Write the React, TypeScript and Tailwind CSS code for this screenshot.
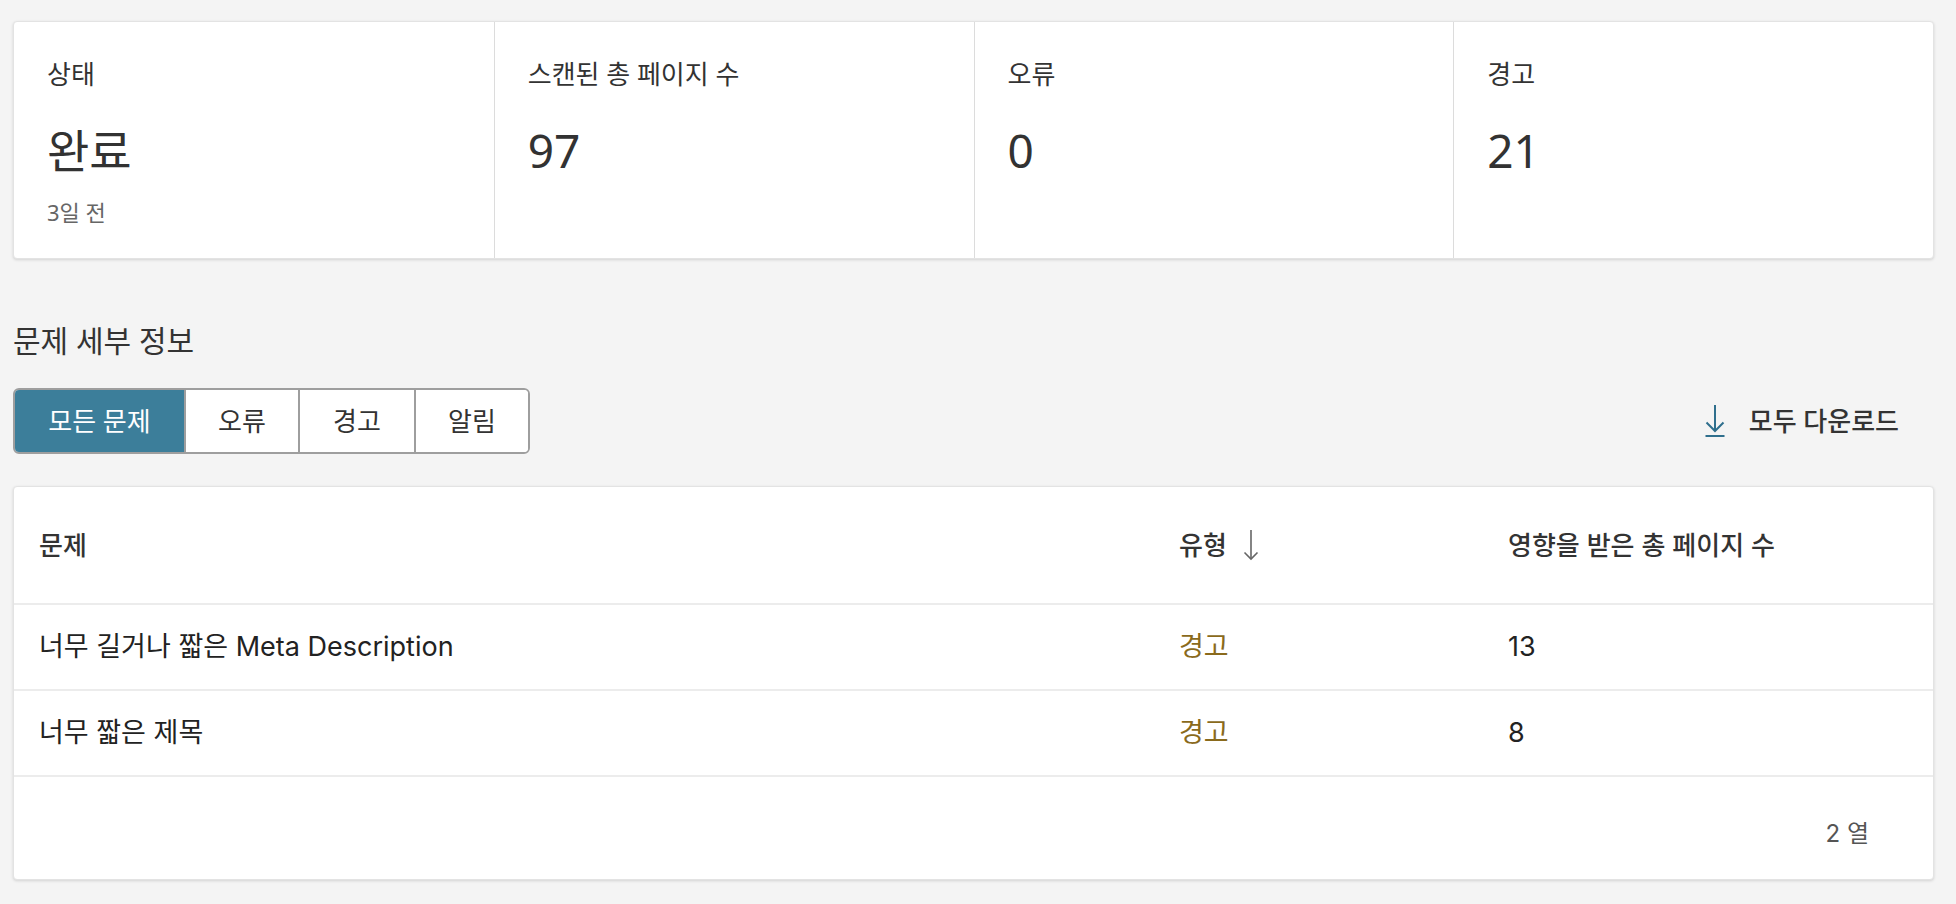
const stats = [
  { label: "상태", value: "완료", sub: "3일 전" },
  { label: "스캔된 총 페이지 수", value: "97" },
  { label: "오류", value: "0" },
  { label: "경고", value: "21" },
];

const tabs = [
  { name: "모든 문제", width: "w-[169px]", active: true },
  { name: "오류", width: "w-[114px]" },
  { name: "경고", width: "w-[116px]" },
  { name: "알림", width: "w-[114px]" },
];

const issues = [
  { title: "너무 길거나 짧은 Meta Description", type: "경고", pages: 13 },
  { title: "너무 짧은 제목", type: "경고", pages: 8 },
];

function SortArrow() {
  return (
    <svg width="16" height="32" viewBox="0 0 16 32" fill="none" stroke="#666" strokeWidth="1.6">
      <path d="M8 1v29" />
      <path d="M1.5 23.5L8 30l6.5-6.5" />
    </svg>
  );
}

function DownloadIcon() {
  return (
    <svg width="20" height="34" viewBox="0 0 20 34" fill="none" stroke="#2f6f8d" strokeWidth="2">
      <path d="M10 1v26" />
      <path d="M1.5 18.5L10 27l8.5-8.5" />
      <path d="M0.5 32h19" />
    </svg>
  );
}

export default function App() {
  return (
    <div className="min-h-[904px] bg-[#f4f4f4] pt-[21px] pr-[22px] pb-[24px] pl-[13px] font-['Noto_Sans','Noto_Sans_CJK_KR',sans-serif] text-[#333]">
      {/* summary */}
      <div className="grid grid-cols-4 rounded-[4px] border border-[#e3e3e3] bg-white shadow-[0_1px_3px_rgba(0,0,0,0.14)]">
        {stats.map((s, i) => (
          <div
            key={s.label}
            className={`px-[33px] pt-[36px] pb-[32px] ${i > 0 ? "border-l border-[#dcdcdc]" : ""}`}
          >
            <div className="text-[26px] leading-[32px]">{s.label}</div>
            <div className="mt-[32px] text-[46px] leading-[56px] text-[#323232]">{s.value}</div>
            {s.sub && <div className="mt-[20px] text-[22px] leading-[28px] text-[#666]">{s.sub}</div>}
          </div>
        ))}
      </div>

      <h2 className="mt-[64px] text-[30px] leading-[36px] text-[#333]">문제 세부 정보</h2>

      <div className="mt-[29px] flex items-center justify-between">
        <div className="flex h-[66px] overflow-hidden rounded-[6px] border-2 border-[#9e9e9e] bg-white">
          {tabs.map((t, i) => (
            <button
              key={t.name}
              className={`${t.width} flex items-center justify-center text-[26px] ${i > 0 ? "border-l-2 border-[#9e9e9e]" : ""} ${t.active ? "bg-[#3c7e9a] text-white" : "bg-white text-[#333]"}`}
            >
              {t.name}
            </button>
          ))}
        </div>
        <button className="mr-[35px] flex items-center gap-[24px] text-[26px] font-medium text-[#333]">
          <DownloadIcon />
          모두 다운로드
        </button>
      </div>

      {/* table */}
      <div className="mt-[32px] rounded-[4px] border border-[#e3e3e3] bg-white font-['Inter','Noto_Sans_CJK_KR',sans-serif] shadow-[0_1px_3px_rgba(0,0,0,0.14)]">
        <div className="grid h-[118px] grid-cols-[1140px_329px_1fr] items-center border-b-2 border-[#ececec] pl-[25px] text-[26px] font-medium text-[#333]">
          <div>문제</div>
          <div className="flex items-center gap-[16px]">
            유형
            <SortArrow />
          </div>
          <div>영향을 받은 총 페이지 수</div>
        </div>
        {issues.map((row) => (
          <div
            key={row.title}
            className="grid h-[86px] grid-cols-[1140px_329px_1fr] items-center border-b-2 border-[#ececec] pl-[25px] text-[27px] text-[#222]"
          >
            <div>{row.title}</div>
            <div className="text-[#8a6a1c]">{row.type}</div>
            <div>{row.pages}</div>
          </div>
        ))}
        <div className="flex justify-end pt-[43px] pr-[64px] pb-[31px] text-[24px] leading-[28px] text-[#555]">
          2 열
        </div>
      </div>
    </div>
  );
}
